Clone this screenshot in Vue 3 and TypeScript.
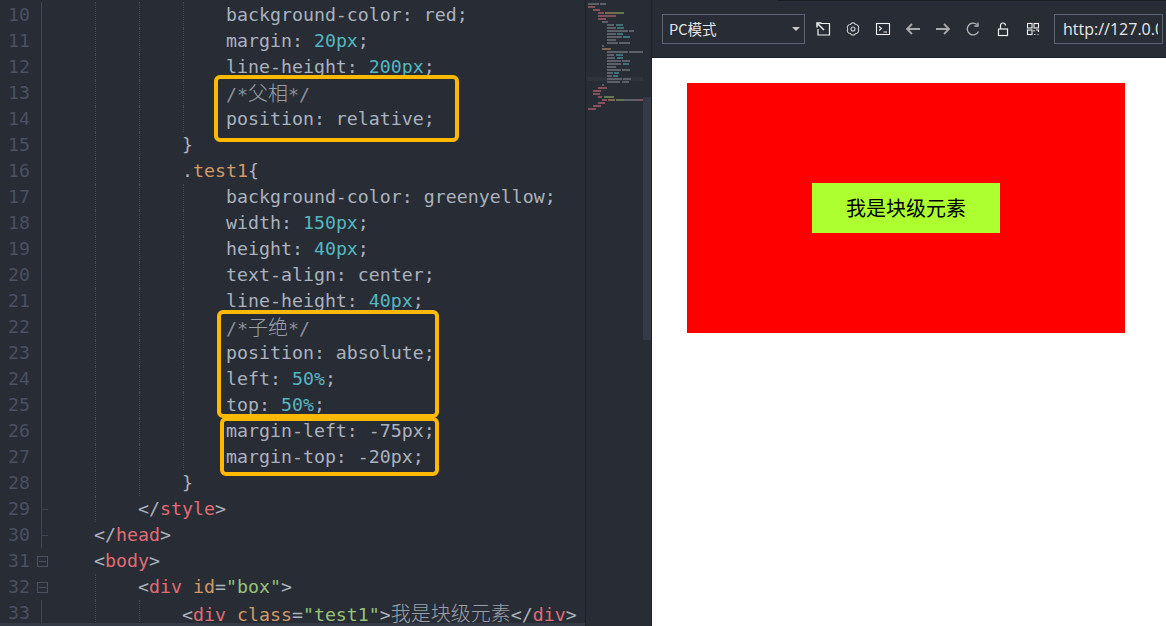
<script setup lang="ts">
type Tok = [string, string?];
interface Line { n: number; indent: number; fold?: 'box' | 'tick'; toks: Tok[] }

const t = 't', r = 'r', o = 'o', g = 'g', c = 'c', z = 'z';
const lines: Line[] = [
  { n: 10, indent: 4, toks: [['background-color: red;']] },
  { n: 11, indent: 4, toks: [['margin: '], ['20px', t], [';']] },
  { n: 12, indent: 4, toks: [['line-height: '], ['200px', t], [';']] },
  { n: 13, indent: 4, toks: [['/*', c], ['父相', z], ['*/', c]] },
  { n: 14, indent: 4, toks: [['position: relative;']] },
  { n: 15, indent: 3, toks: [['}']] },
  { n: 16, indent: 3, toks: [['.'], ['test1', o], ['{']] },
  { n: 17, indent: 4, toks: [['background-color: greenyellow;']] },
  { n: 18, indent: 4, toks: [['width: '], ['150px', t], [';']] },
  { n: 19, indent: 4, toks: [['height: '], ['40px', t], [';']] },
  { n: 20, indent: 4, toks: [['text-align: center;']] },
  { n: 21, indent: 4, toks: [['line-height: '], ['40px', t], [';']] },
  { n: 22, indent: 4, toks: [['/*', c], ['子绝', z], ['*/', c]] },
  { n: 23, indent: 4, toks: [['position: absolute;']] },
  { n: 24, indent: 4, toks: [['left: '], ['50%', t], [';']] },
  { n: 25, indent: 4, toks: [['top: '], ['50%', t], [';']] },
  { n: 26, indent: 4, toks: [['margin-left: -75px;']] },
  { n: 27, indent: 4, toks: [['margin-top: -20px;']] },
  { n: 28, indent: 3, toks: [['}']] },
  { n: 29, indent: 2, fold: 'tick', toks: [['</'], ['style', r], ['>']] },
  { n: 30, indent: 1, fold: 'tick', toks: [['</'], ['head', r], ['>']] },
  { n: 31, indent: 1, fold: 'box', toks: [['<'], ['body', r], ['>']] },
  { n: 32, indent: 2, fold: 'box', toks: [['<'], ['div', r], [' '], ['id', o], ['='], ['"box"', g], ['>']] },
  { n: 33, indent: 3, toks: [['<'], ['div', r], [' '], ['class', o], ['='], ['"test1"', g], ['>'], ['我是块级元素', z], ['</'], ['div', r], ['>']] },
];

// Minimap: each segment is [start, end, colour] measured in px from the minimap's left edge.
type Seg = [number, number, string];
const G = 'mg', R = 'mr', O = 'mo', N = 'mn', T = 'mt';
const mini: Seg[][] = [
  [[2, 13, G], [14, 20, G]],
  [[2, 9, R]],
  [[7, 14, R]],
  [[12, 18, R], [19, 27, O], [27, 38, N]],
  [[12, 19, R], [19, 22, G], [22, 30, R]],
  [[12, 20, R]],
  [[16, 22, G]],
  [[21, 28, G], [30, 37, T]],
  [[21, 30, G], [31, 38, T]],
  [[21, 42, G], [43, 48, G]],
  [[21, 30, G], [31, 37, T]],
  [[21, 36, G], [37, 44, T]],
  [[21, 30, G]],
  [[21, 32, G], [33, 44, G]],
  [[16, 18, G]],
  [[16, 25, O]],
  [[21, 42, G], [43, 57, G]],
  [[21, 28, G], [30, 37, T]],
  [[21, 29, G], [31, 37, T]],
  [[21, 35, G], [36, 44, G]],
  [[21, 35, G], [37, 43, T]],
  [[21, 30, G]],
  [[21, 35, G], [36, 44, G]],
  [[21, 27, G], [28, 33, T]],
  [[21, 26, G], [27, 32, T]],
  [[21, 36, G], [37, 45, G]],
  [[21, 34, G], [36, 43, G]],
  [[16, 18, G]],
  [[12, 21, R]],
  [[7, 15, R]],
  [[7, 14, R]],
  [[12, 16, R], [18, 28, N]],
  [[16, 21, R], [22, 29, O], [30, 38, N], [38, 52, G], [52, 57, R]],
  [[12, 19, R]],
  [[7, 15, R]],
  [[2, 10, R]],
];
const segStyle = (row: Seg[], i: number) => ({
  marginLeft: `${row[i][0] - (i ? row[i - 1][1] : 0)}px`,
  width: `${row[i][1] - row[i][0]}px`,
});
</script>

<template>
  <div class="app">
    <section class="editor">
      <div class="code">
        <div v-for="l in lines" :key="l.n" class="line">
          <span class="num">{{ l.n }}</span>
          <span class="fold" :class="l.fold ? 'fold-' + l.fold : 'fold-line'"></span>
          <span class="lvl first"></span>
          <span v-for="i in l.indent - 1" :key="i" class="lvl guide"></span>
          <span class="txt"><span v-for="(k, i) in l.toks" :key="i" :class="k[1]">{{ k[0] }}</span></span>
        </div>
      </div>
      <i class="mark m1"></i>
      <i class="mark m2"></i>
      <i class="mark m3"></i>
      <div class="hbar"></div>
    </section>

    <aside class="minimap">
      <div class="band"></div>
      <div v-for="(row, ri) in mini" :key="ri" class="mrow">
        <span v-for="(s, i) in row" :key="i" :class="s[2]" :style="segStyle(row, i)"></span>
      </div>
    </aside>
    <div class="vscroll"><div class="thumb"></div></div>

    <main class="preview">
      <header class="toolbar">
        <div class="select"><span>PC模式</span><i class="caret"></i></div>
        <div class="icons">
          <span class="ico"><svg width="16" height="16" viewBox="0 0 16 16" fill="none" stroke="#f0f0f0" stroke-width="1.2"><path d="M6 2.500h8.500v11.500H3V8" /><path d="M9 9 2.500 2.500" stroke-width="1.500" /><path d="M2 6.500V2h4.500" stroke-width="1.500" /></svg></span>
          <span class="ico"><svg width="16" height="16" viewBox="0 0 16 16" fill="none" stroke="#d0d0d0" stroke-width="1.100"><path d="M13.200 8 A2.900 2.900 0 0 1 10.600 12.500 A2.900 2.900 0 0 1 5.400 12.500 A2.900 2.900 0 0 1 2.800 8 A2.900 2.900 0 0 1 5.400 3.500 A2.900 2.900 0 0 1 10.600 3.500 A2.900 2.900 0 0 1 13.200 8 Z" /><circle cx="8" cy="8" r="2" /></svg></span>
          <span class="ico"><svg width="16" height="16" viewBox="0 0 16 16" fill="none" stroke="#f0f0f0" stroke-width="1.100"><rect x="1.500" y="2.500" width="13" height="11" /><path d="m4 5.500 2.500 2L4 9.500M8.500 11H12" /></svg></span>
          <span class="ico"><svg width="16" height="16" viewBox="0 0 16 16" fill="none" stroke="#a9a9a9" stroke-width="1.800"><path d="M15 8H2.500M7 3 2 8l5 5" /></svg></span>
          <span class="ico"><svg width="16" height="16" viewBox="0 0 16 16" fill="none" stroke="#a9a9a9" stroke-width="1.800"><path d="M1 8h12.500M9 3l5 5-5 5" /></svg></span>
          <span class="ico"><svg width="16" height="16" viewBox="0 0 16 16" fill="none" stroke="#b5b5b5" stroke-width="1.300"><path d="M13.500 10.500A5.900 5.900 0 1 1 12 3.500" /><path d="M13 1.500V5H9.500" /></svg></span>
          <span class="ico"><svg width="16" height="16" viewBox="0 0 16 16" fill="none" stroke="#f0f0f0" stroke-width="1.200"><rect x="3.500" y="8" width="9" height="6.500" /><path d="M5.500 8V4.500a2.500 2.500 0 0 1 5 0" /></svg></span>
          <span class="ico"><svg width="16" height="16" viewBox="0 0 16 16" fill="none" stroke="#f0f0f0" stroke-width="1.100"><rect x="2.500" y="2.500" width="4.500" height="4.500" /><rect x="9" y="2.500" width="4.500" height="4.500" /><rect x="2.500" y="9" width="4.500" height="4.500" /><path d="M9 9v1.500M11 9h2.500v2M9 13.500h1.500M12.500 13.500h1" /></svg></span>
        </div>
        <div class="url"><span>http://127.0.0.1:8020/</span></div>
      </header>
      <div class="page">
        <div class="box"><div class="test1">我是块级元素</div></div>
      </div>
    </main>
  </div>
</template>

<style>
html, body { margin: 0; background: #282c34; overflow: hidden; }
</style>

<style scoped>
.app { display: flex; width: 1166px; height: 626px; overflow: hidden; background: #282c34; }
.editor { position: relative; width: 585px; height: 626px; overflow: hidden; flex: none; border-right: 1px solid #1e2127; }
.code { padding-top: 2px; font: 18.25px/26px "DejaVu Sans Mono", "Noto Sans CJK SC", monospace; color: #abb2bf; }
.line { display: flex; height: 26px; white-space: pre; }
.num { width: 30px; flex: none; text-align: right; color: #495162; }
.fold { width: 21px; flex: none; box-sizing: border-box; position: relative; }
.fold-line::before, .fold-tick::before { content: ""; position: absolute; left: 11px; top: 0; bottom: 0; width: 1px; background: #3f4654; }
.fold-tick::after { content: ""; position: absolute; left: 12px; top: 13px; width: 6px; height: 1px; background: #3f4654; }
.fold-box::before { content: ""; position: absolute; left: 7px; top: 8px; width: 9px; height: 9px; border: 1px solid #4b5362; box-sizing: content-box; }
.fold-box::after { content: ""; position: absolute; left: 9px; top: 13px; width: 7px; height: 1px; background: #4b5362; }
.lvl { width: 44px; flex: none; box-sizing: border-box; }
.guide { border-left: 1px dotted #434a57; }
.txt { margin-left: -1px; }
.t { color: #56b6c2; }
.r { color: #e06c75; }
.o { color: #d19a66; }
.g { color: #98c379; }
.c { color: #8b919c; }
.z { color: #9aa0aa; font-size: 20px; font-weight: 300; font-family: "Noto Sans CJK SC", sans-serif; }
.mark { position: absolute; box-sizing: border-box; border: 4px solid #ffb900; border-radius: 6px; }
.m1 { left: 214px; top: 75px; width: 245px; height: 67px; }
.m2 { left: 217px; top: 310px; width: 222px; height: 108px; }
.m3 { left: 220px; top: 417px; width: 219px; height: 59px; }
.hbar { position: absolute; left: 0; right: 0; bottom: 0; height: 3px; background: #343a46; }
.minimap { position: relative; width: 57px; flex: none; padding-top: 3px; box-sizing: border-box; }
.band { position: absolute; left: 1px; right: 0; top: 77px; height: 4px; background: #2e333c; }
.mrow { position: relative; display: flex; height: 2px; margin-bottom: 1px; }
.mrow span { flex: none; height: 2px; }
.mg { background: #5c6068; }
.mr { background: #84505a; }
.mo { background: #80654f; }
.mn { background: #64764f; }
.mt { background: #3d7278; }
.vscroll { width: 9px; flex: none; padding-top: 97px; box-sizing: border-box; border-right: 1px solid #1e2127; }
.thumb { height: 243px; background: #343a46; }
.preview { flex: 1; min-width: 0; display: flex; flex-direction: column; }
.toolbar { position: relative; height: 58px; box-sizing: border-box; display: flex; align-items: flex-start; padding: 14px 0 0 10px; background: #282c34; border-bottom: 1px solid #1b1e23; }
.toolbar::before { content: ""; position: absolute; left: 126px; right: 0; top: 0; height: 1px; background: #1b1e23; }
.select { position: relative; width: 143px; height: 30px; box-sizing: border-box; border: 1px solid #5b6579; padding-left: 6px; font: 14.500px/28px "Noto Sans CJK SC", "Noto Sans", sans-serif; color: #e6e6e6; }
.caret { position: absolute; right: 4px; top: 12px; border: 4px solid transparent; border-top-color: #c9c9c9; border-bottom: 0; }
.icons { display: flex; margin-left: 3px; }
.ico { width: 30px; height: 30px; display: flex; align-items: center; justify-content: center; }
.url { width: 109px; height: 30px; margin-left: 6px; box-sizing: border-box; border: 1px solid #5b6579; padding: 0 4px 0 8px; overflow: hidden; font: 16px/28px "Open Sans", sans-serif; color: #e8e8e8; white-space: nowrap; }
.url span { display: block; overflow: hidden; }
.page { flex: 1; background: #fff; padding: 25px 41px 0 35px; }
.box { height: 250px; background: #f00; display: flex; align-items: center; justify-content: center; }
.test1 { width: 188px; height: 50px; background: #adff2f; color: #000; text-align: center; font: 20px/50px "Noto Sans CJK SC", sans-serif; }
</style>
